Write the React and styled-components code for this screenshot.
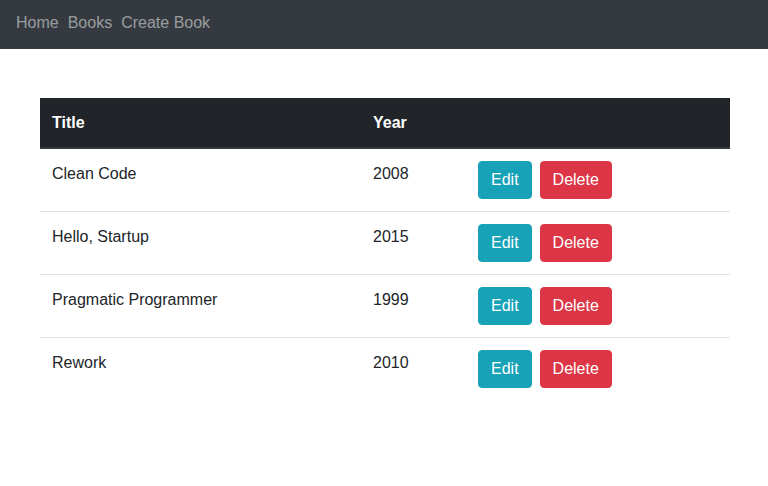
import React from "react";
import styled, { createGlobalStyle } from "styled-components";

const Global = createGlobalStyle`
  html, body { margin: 0; padding: 0; background: #fff; }
  body { font-family: "Liberation Sans", Arial, sans-serif; font-size: 16px; line-height: 24px; color: #212529; }
  * { box-sizing: border-box; }
`;

const NavBar = styled.nav`
  height: 49px;
  background: #343a40;
  display: flex;
  align-items: flex-start;
  padding: 11px 16px 0;
  gap: 9px;
`;

const NavLink = styled.a`
  color: rgba(255, 255, 255, 0.5);
  text-decoration: none;
  font-size: 16px;
  line-height: 24px;
`;

const Main = styled.main`
  padding: 49px 38px 0 40px;
`;

const Table = styled.table`
  width: 690px;
  border-collapse: collapse;
  table-layout: fixed;
`;

const Th = styled.th`
  background: #212529;
  color: #fff;
  text-align: left;
  font-weight: bold;
  padding: 13px 12px 11px;
  height: 50px;
  border-bottom: 2px solid #32383e;
  vertical-align: top;
  width: ${(p) => p.$w || "auto"};
`;

const Td = styled.td`
  padding: ${(p) => (p.$actions ? "12px" : "13px 12px 11px")};
  vertical-align: top;
  border-top: ${(p) => (p.$first ? "none" : "1px solid #dee2e6")};
`;

const Actions = styled.div`
  display: flex;
  gap: 8px;
`;

const Button = styled.button`
  font-family: inherit;
  font-size: 16px;
  line-height: 24px;
  padding: 6px 12px;
  border-radius: 4px;
  color: #fff;
  border: 1px solid ${(p) => (p.$variant === "danger" ? "#dc3545" : "#17a2b8")};
  background: ${(p) => (p.$variant === "danger" ? "#dc3545" : "#17a2b8")};
  cursor: pointer;
`;

const books = [
  { title: "Clean Code", year: 2008 },
  { title: "Hello, Startup", year: 2015 },
  { title: "Pragmatic Programmer", year: 1999 },
  { title: "Rework", year: 2010 },
];

export default function App() {
  return (
    <>
      <Global />
      <NavBar>
        <NavLink href="#">Home</NavLink>
        <NavLink href="#">Books</NavLink>
        <NavLink href="#">Create Book</NavLink>
      </NavBar>
      <Main>
        <Table>
          <thead>
            <tr>
              <Th $w="321px">Title</Th>
              <Th $w="105px">Year</Th>
              <Th />
            </tr>
          </thead>
          <tbody>
            {books.map((b, i) => (
              <tr key={b.title}>
                <Td $first={i === 0}>{b.title}</Td>
                <Td $first={i === 0}>{b.year}</Td>
                <Td $first={i === 0} $actions>
                  <Actions>
                    <Button>Edit</Button>
                    <Button $variant="danger">Delete</Button>
                  </Actions>
                </Td>
              </tr>
            ))}
          </tbody>
        </Table>
      </Main>
    </>
  );
}
